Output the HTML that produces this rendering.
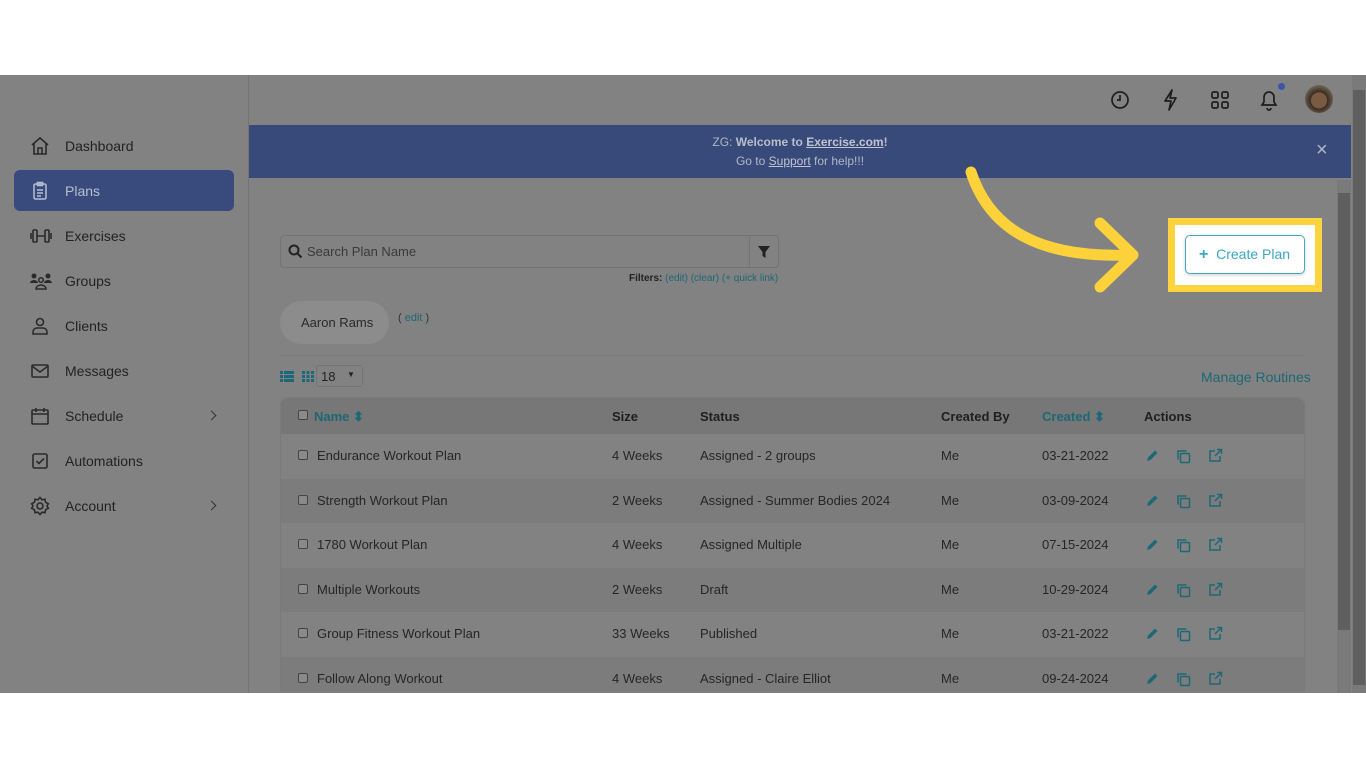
<!DOCTYPE html>
<html><head><meta charset="utf-8"><style>
*{margin:0;padding:0;box-sizing:border-box}
body{width:1366px;height:768px;background:#fff;font-family:"Liberation Sans",sans-serif;position:relative;overflow:hidden;color:#1f1f1f}
.app{position:absolute;left:0;top:75px;width:1366px;height:618px;background:#828282;overflow:hidden}
.side{position:absolute;left:0;top:0;width:249px;height:618px;border-right:1px solid #747474}
.nav{position:absolute;left:14px;width:220px;height:41px;font-size:14px;color:#222;display:flex;align-items:center}
.nav svg{position:absolute;left:15px}
.nav span{position:absolute;left:51px}
.nav.act{background:#384b7c;border-radius:6px;color:#b8bfd0}
.chev{position:absolute;left:194px;width:7px;height:7px;border-right:1.5px solid #333;border-top:1.5px solid #333;transform:rotate(45deg)}
.banner{position:absolute;left:249px;top:50px;width:1102px;height:53px;background:#384a7a;color:#b0b6c6;font-size:12px;text-align:center;line-height:19px;padding-top:8px}
.banner b{color:#b8bdcc}.banner u{color:#c0c4d0}
.t{position:absolute;font-size:13px;white-space:nowrap}
.teal{color:#1d6876}
.row{position:absolute;left:280px;width:1025px;height:44.5px}
.cb{position:absolute;width:10px;height:10px;border:1px solid #444;border-radius:2px;background:#8a8a8a}
</style></head><body>
<div class="app">
<div class="side">
 <div class="nav" style="top:50px"><svg width="22" height="22" viewBox="0 0 22 22" fill="none" stroke="#2a2a2a" stroke-width="1.6"><path d="M3 10L11 3l8 7M5 8.5V19h12V8.5M9 19v-6h4v6"/></svg><span>Dashboard</span></div>
 <div class="nav act" style="top:95px"><svg width="22" height="22" viewBox="0 0 22 22" fill="none" stroke="#b8bfd0" stroke-width="1.5"><rect x="5" y="4" width="12" height="15" rx="1.5"/><rect x="8.5" y="2.5" width="5" height="3"/><path d="M8 10h6M8 13h6M8 16h4"/></svg><span>Plans</span></div>
 <div class="nav" style="top:140px"><svg width="24" height="22" viewBox="0 0 24 22" fill="none" stroke="#2a2a2a" stroke-width="1.6"><rect x="4" y="5" width="4" height="12" rx="1"/><rect x="16" y="5" width="4" height="12" rx="1"/><path d="M8 11h8M2 8v6M22 8v6"/></svg><span>Exercises</span></div>
 <div class="nav" style="top:185px"><svg width="24" height="22" viewBox="0 0 24 22" fill="#2a2a2a"><circle cx="5" cy="6" r="2.5"/><circle cx="19" cy="6" r="2.5"/><circle cx="12" cy="10" r="2.3" fill="none" stroke="#2a2a2a" stroke-width="1.5"/><path d="M1 13a4 3 0 0 1 8 0zM15 13a4 3 0 0 1 8 0z"/><path d="M7 19a5 4 0 0 1 10 0z" fill="none" stroke="#2a2a2a" stroke-width="1.5"/></svg><span>Groups</span></div>
 <div class="nav" style="top:230px"><svg width="22" height="22" viewBox="0 0 22 22" fill="none" stroke="#2a2a2a" stroke-width="1.6"><circle cx="11" cy="7" r="3.5"/><path d="M4 19v-2a4 4 0 0 1 4-4h6a4 4 0 0 1 4 4v2z"/></svg><span>Clients</span></div>
 <div class="nav" style="top:275px"><svg width="22" height="22" viewBox="0 0 22 22" fill="none" stroke="#2a2a2a" stroke-width="1.6"><rect x="3" y="5" width="16" height="12" rx="1"/><path d="M3 6l8 6 8-6"/></svg><span>Messages</span></div>
 <div class="nav" style="top:320px"><svg width="22" height="22" viewBox="0 0 22 22" fill="none" stroke="#2a2a2a" stroke-width="1.6"><rect x="3" y="5" width="16" height="14" rx="1"/><path d="M3 9h16M7 3v4M15 3v4"/></svg><span>Schedule</span><i class="chev" style="top:17px"></i></div>
 <div class="nav" style="top:365px"><svg width="22" height="22" viewBox="0 0 22 22" fill="none" stroke="#2a2a2a" stroke-width="1.6"><rect x="4" y="4" width="14" height="14" rx="1.5"/><path d="M7.5 11l2.5 2.5 5-5"/></svg><span>Automations</span></div>
 <div class="nav" style="top:410px"><svg width="22" height="22" viewBox="0 0 22 22" fill="none" stroke="#2a2a2a" stroke-width="1.6"><circle cx="11" cy="11" r="3"/><path d="M11 2.5l2 2.3 3-.5.6 3 2.7 1.4-1.3 2.3 1.3 2.3-2.7 1.4-.6 3-3-.5-2 2.3-2-2.3-3 .5-.6-3L2.7 13.3 4 11 2.7 8.7l2.7-1.4.6-3 3 .5z"/></svg><span>Account</span><i class="chev" style="top:17px"></i></div>
</div>
<!-- top icons -->
<svg style="position:absolute;left:1109px;top:14px" width="22" height="22" viewBox="0 0 22 22" fill="none" stroke="#1e1e1e" stroke-width="1.7"><circle cx="11" cy="11" r="8"/><path d="M11 6v5H8"/></svg>
<svg style="position:absolute;left:1160px;top:13px" width="20" height="24" viewBox="0 0 20 24" fill="none" stroke="#1e1e1e" stroke-width="1.7" stroke-linejoin="round"><path d="M12 2L5 13h6l-2 9 7-12h-6z"/></svg>
<svg style="position:absolute;left:1209px;top:14px" width="22" height="22" viewBox="0 0 22 22" fill="none" stroke="#1e1e1e" stroke-width="1.7"><rect x="3" y="3" width="6" height="6" rx="1.5"/><rect x="13" y="3" width="6" height="6" rx="1.5"/><rect x="3" y="13" width="6" height="6" rx="1.5"/><rect x="13" y="13" width="6" height="6" rx="1.5"/></svg>
<svg style="position:absolute;left:1258px;top:13px" width="22" height="24" viewBox="0 0 22 24" fill="none" stroke="#1e1e1e" stroke-width="1.7"><path d="M4 17h14l-2-3v-5a5 5 0 0 0-10 0v5zM9 20a2 2 0 0 0 4 0"/></svg>
<div style="position:absolute;left:1278px;top:8px;width:7px;height:7px;border-radius:50%;background:#3a55a8"></div>
<div style="position:absolute;left:1305px;top:10px;width:28px;height:28px;border-radius:50%;background:radial-gradient(circle at 50% 55%,#7a5a40 0 38%,#3a2a20 40%,#6a6050 70%)"></div>
<!-- scrollbars -->
<div style="position:absolute;left:1352px;top:0;width:14px;height:618px;background:#7a7a7a"></div>
<div style="position:absolute;left:1353px;top:15px;width:12px;height:595px;background:#5f5f5f"></div>
<div style="position:absolute;left:1337px;top:105px;width:14px;height:513px;background:#7a7a7a"></div>
<div style="position:absolute;left:1338px;top:118px;width:12px;height:437px;background:#5f5f5f"></div>
<div class="banner">ZG: <b>Welcome to <u>Exercise.com</u>!</b><br>Go to <u>Support</u> for help!!!</div>
<div class="t" style="left:1316px;top:64px;font-size:20px;color:#b0b6c6">×</div>
<!-- search -->
<div style="position:absolute;left:280px;top:160px;width:499px;height:33px;border:1px solid #747474;border-radius:4px"></div>
<div style="position:absolute;left:749px;top:160px;width:1px;height:33px;background:#747474"></div>
<svg style="position:absolute;left:288px;top:169px" width="15" height="15" viewBox="0 0 15 15" fill="none" stroke="#222" stroke-width="2"><circle cx="6" cy="6" r="4.5"/><path d="M9.5 9.5L13.5 13.5"/></svg>
<svg style="position:absolute;left:757px;top:170px" width="14" height="14" viewBox="0 0 14 14" fill="#222"><path d="M1 1h12L8.5 7v6L5.5 11V7z"/></svg>
<div class="t" style="left:307px;top:169px;color:#3a3a3a">Search Plan Name</div>
<div class="t" style="left:629px;top:198px;font-size:10px;color:#222"><b>Filters:</b> <span class="teal">(edit)</span> <span class="teal">(clear)</span> <span class="teal">(+ quick link)</span></div>
<div style="position:absolute;left:280px;top:226px;width:109px;height:43px;border-radius:22px;background:#8c8c8c"></div>
<div class="t" style="left:301px;top:240px;color:#2a2a2a">Aaron Rams</div>
<div class="t" style="left:398px;top:237px;font-size:11px;color:#333">( <span class="teal">edit</span> )</div>
<div style="position:absolute;left:280px;top:280px;width:1025px;height:1px;background:#787878"></div>
<svg style="position:absolute;left:280px;top:296px" width="14" height="11" fill="#1d6876"><rect x="0" y="0" width="3" height="3"/><rect x="4" y="0" width="10" height="3"/><rect x="0" y="4" width="3" height="3"/><rect x="4" y="4" width="10" height="3"/><rect x="0" y="8" width="3" height="3"/><rect x="4" y="8" width="10" height="3"/></svg>
<svg style="position:absolute;left:302px;top:296px" width="12" height="11" fill="#1d6876"><rect x="0" y="0" width="3" height="3"/><rect x="4.5" y="0" width="3" height="3"/><rect x="9" y="0" width="3" height="3"/><rect x="0" y="4" width="3" height="3"/><rect x="4.5" y="4" width="3" height="3"/><rect x="9" y="4" width="3" height="3"/><rect x="0" y="8" width="3" height="3"/><rect x="4.5" y="8" width="3" height="3"/><rect x="9" y="8" width="3" height="3"/></svg>
<div style="position:absolute;left:316px;top:290px;width:47px;height:22px;border:1px solid #747474;border-radius:3px"></div>
<div class="t" style="left:321px;top:294px;color:#222">18</div>
<div class="t" style="left:347px;top:295px;font-size:8px;color:#222">▼</div>
<div class="t teal" style="left:1201px;top:294px;font-size:14px">Manage Routines</div>
<!-- table -->
<div style="position:absolute;left:280px;top:322px;width:1025px;height:300px;border:1px solid #7a7a7a;border-radius:8px;background:#828282"></div>
<div style="position:absolute;left:281px;top:323px;width:1023px;height:36px;background:#777;border-radius:8px 8px 0 0"></div>
<div class="cb" style="left:298px;top:335px"></div>
<div class="t teal" style="left:314px;top:334px;font-weight:bold">Name ⬍</div>
<div class="t" style="left:612px;top:334px;font-weight:bold">Size</div>
<div class="t" style="left:700px;top:334px;font-weight:bold">Status</div>
<div class="t" style="left:941px;top:334px;font-weight:bold">Created By</div>
<div class="t teal" style="left:1042px;top:334px;font-weight:bold">Created ⬍</div>
<div class="t" style="left:1144px;top:334px;font-weight:bold">Actions</div>
<div id="rows"></div>
<!-- highlight -->
<div style="position:absolute;left:1168px;top:143px;width:154px;height:74px;background:#fdd33e"></div>
<div style="position:absolute;left:1175px;top:150px;width:140px;height:60px;background:#fff"></div>
<div style="position:absolute;left:1185px;top:160px;width:120px;height:39px;border:1.5px solid #40a9c4;border-radius:5px;box-shadow:0 1px 3px rgba(0,0,0,.2)"></div>
<div class="t" style="left:1199px;top:171px;font-size:14px;color:#3aa6c2"><b style="font-size:16px">+</b>&nbsp; Create Plan</div>
<svg style="position:absolute;left:950px;top:85px" width="200" height="140" viewBox="0 0 200 140" fill="none" stroke="#fdd13a" stroke-width="11" stroke-linecap="round" stroke-linejoin="round"><path d="M21 12C40 70 90 98 178 95M150 63L183 95L150 127"/></svg>
</div>
<script>
var d=[["Endurance Workout Plan","4 Weeks","Assigned - 2 groups","03-21-2022"],["Strength Workout Plan","2 Weeks","Assigned - Summer Bodies 2024","03-09-2024"],["1780 Workout Plan","4 Weeks","Assigned Multiple","07-15-2024"],["Multiple Workouts","2 Weeks","Draft","10-29-2024"],["Group Fitness Workout Plan","33 Weeks","Published","03-21-2022"],["Follow Along Workout","4 Weeks","Assigned - Claire Elliot","09-24-2024"]];
var h="";d.forEach(function(r,i){var y=359+i*44.5,c=y+22;
h+='<div style="position:absolute;left:281px;top:'+y+'px;width:1023px;height:44.5px;background:'+(i%2?'#7c7c7c':'#828282')+'"></div>';
h+='<div class="cb" style="left:298px;top:'+(c-6)+'px"></div>';
[[317,r[0]],[612,r[1]],[700,r[2]],[941,"Me"],[1042,r[3]]].forEach(function(x){h+='<div class="t" style="left:'+x[0]+'px;top:'+(c-8)+'px;color:#262626">'+x[1]+'</div>'});
h+='<svg style="position:absolute;left:1145px;top:'+(c-7)+'px" width="14" height="14" viewBox="0 0 14 14" fill="#1d6876"><path d="M2 12l1-3.5 7-7 2.5 2.5-7 7z"/></svg>';
h+='<svg style="position:absolute;left:1176px;top:'+(c-7)+'px" width="15" height="15" viewBox="0 0 15 15" fill="none" stroke="#1d6876" stroke-width="1.5"><rect x="4.5" y="4.5" width="9" height="9" rx="1"/><path d="M2 10.5V2h8.5"/></svg>';
h+='<svg style="position:absolute;left:1208px;top:'+(c-8)+'px" width="15" height="15" viewBox="0 0 15 15" fill="none" stroke="#1d6876" stroke-width="1.5"><path d="M7 3H2v10h10V8M9 1.5h4.5V6M13.5 1.5L7 8"/></svg>';});
document.getElementById("rows").outerHTML=h;
</script>
</body></html>
